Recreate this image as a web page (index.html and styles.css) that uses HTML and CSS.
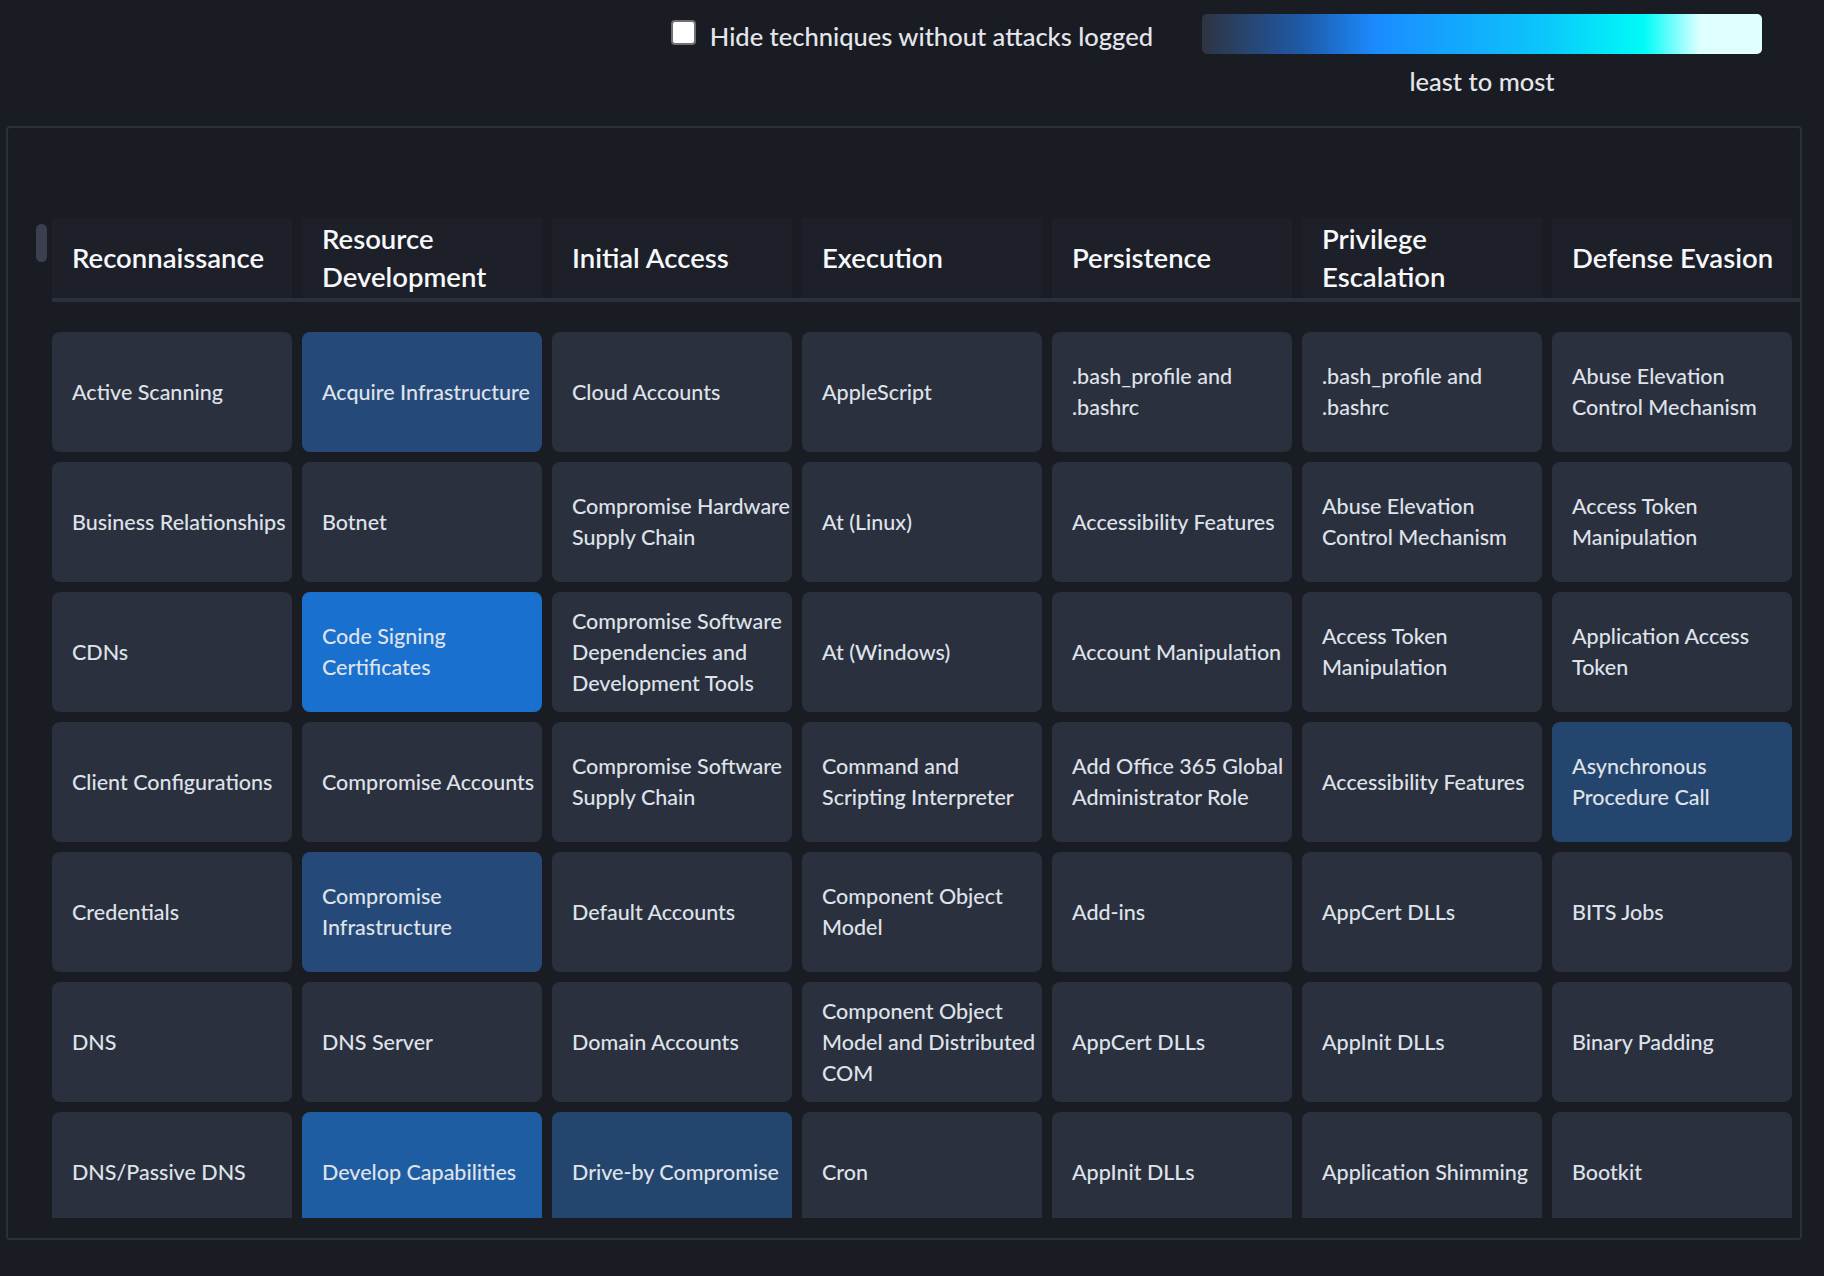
FILE: index.html
```html
<!DOCTYPE html>
<html lang="en">
<head>
  <meta charset="UTF-8">
  <meta name="viewport" content="width=device-width, initial-scale=1.0">
  <title>ATT&amp;CK Heatmap</title>
  <link rel="stylesheet" href="styles.css">
</head>
<body>
  <!-- Filter + legend -->
  <div class="top-bar">
    <label class="hide-toggle">
      <span class="checkbox"></span>
      <span class="toggle-text">Hide techniques without attacks logged</span>
    </label>
    <div class="legend">
      <div class="legend-bar"></div>
      <div class="legend-caption">least to most</div>
    </div>
  </div>

  <!-- Matrix -->
  <div class="matrix-panel">
    <div class="scroll-thumb"></div>

    <div class="tactic-row">
      <div class="tactic">Reconnaissance</div>
      <div class="tactic">Resource Development</div>
      <div class="tactic">Initial Access</div>
      <div class="tactic">Execution</div>
      <div class="tactic">Persistence</div>
      <div class="tactic">Privilege Escalation</div>
      <div class="tactic">Defense Evasion</div>
    </div>

    <div class="technique-grid">
      <!-- Reconnaissance -->
      <div class="technique">Active Scanning</div>
      <div class="technique">Business Relationships</div>
      <div class="technique">CDNs</div>
      <div class="technique">Client Configurations</div>
      <div class="technique">Credentials</div>
      <div class="technique">DNS</div>
      <div class="technique">DNS/Passive DNS</div>

      <!-- Resource Development -->
      <div class="technique level-2">Acquire Infrastructure</div>
      <div class="technique">Botnet</div>
      <div class="technique level-4">Code Signing Certificates</div>
      <div class="technique">Compromise Accounts</div>
      <div class="technique level-2">Compromise Infrastructure</div>
      <div class="technique">DNS Server</div>
      <div class="technique level-3">Develop Capabilities</div>

      <!-- Initial Access -->
      <div class="technique">Cloud Accounts</div>
      <div class="technique">Compromise Hardware Supply Chain</div>
      <div class="technique">Compromise Software Dependencies and Development Tools</div>
      <div class="technique">Compromise Software Supply Chain</div>
      <div class="technique">Default Accounts</div>
      <div class="technique">Domain Accounts</div>
      <div class="technique level-1">Drive-by Compromise</div>

      <!-- Execution -->
      <div class="technique">AppleScript</div>
      <div class="technique">At (Linux)</div>
      <div class="technique">At (Windows)</div>
      <div class="technique">Command and Scripting Interpreter</div>
      <div class="technique">Component Object Model</div>
      <div class="technique">Component Object Model and Distributed COM</div>
      <div class="technique">Cron</div>

      <!-- Persistence -->
      <div class="technique">.bash_profile and .bashrc</div>
      <div class="technique">Accessibility Features</div>
      <div class="technique">Account Manipulation</div>
      <div class="technique">Add Office 365 Global Administrator Role</div>
      <div class="technique">Add-ins</div>
      <div class="technique">AppCert DLLs</div>
      <div class="technique">AppInit DLLs</div>

      <!-- Privilege Escalation -->
      <div class="technique">.bash_profile and .bashrc</div>
      <div class="technique">Abuse Elevation Control Mechanism</div>
      <div class="technique">Access Token Manipulation</div>
      <div class="technique">Accessibility Features</div>
      <div class="technique">AppCert DLLs</div>
      <div class="technique">AppInit DLLs</div>
      <div class="technique">Application Shimming</div>

      <!-- Defense Evasion -->
      <div class="technique">Abuse Elevation Control Mechanism</div>
      <div class="technique">Access Token Manipulation</div>
      <div class="technique">Application Access Token</div>
      <div class="technique level-1">Asynchronous Procedure Call</div>
      <div class="technique">BITS Jobs</div>
      <div class="technique">Binary Padding</div>
      <div class="technique">Bootkit</div>
    </div>
  </div>
</body>
</html>
```

FILE: styles.css
```css
/* General */
body {
  margin: 0 22px 0 6px;
  background: #1a1c23;
  color: #e4e6ec;
  font-family: Lato, "Noto Sans", sans-serif;
}

/* Top bar: filter toggle + legend */
.top-bar {
  height: 126px;
  box-sizing: border-box;
  padding: 14px 40px 0 0;
  display: flex;
  justify-content: flex-end;
  align-items: flex-start;
  gap: 49px;
}

.hide-toggle {
  display: flex;
  align-items: flex-start;
  gap: 14px;
  margin-top: 6px;
  cursor: pointer;
}

.checkbox {
  width: 25px;
  height: 25px;
  box-sizing: border-box;
  background: #fff;
  border: 2px solid #6f6f74;
  border-radius: 4px;
  flex-shrink: 0;
}

.toggle-text {
  margin-top: 1px;
  font-size: 25.5px;
  font-weight: 500;
  line-height: 30px;
}

.legend {
  width: 560px;
  text-align: center;
}

.legend-bar {
  height: 40px;
  border-radius: 5px;
  background: linear-gradient(to right, #2e3442 0%, #1f5aa8 18%, #1b8bff 31%, #0cc4fb 60%, #00fbf8 79%, #dfffff 89%, #dfffff 100%);
}

.legend-caption {
  margin-top: 12px;
  font-size: 25.5px;
  font-weight: 500;
  line-height: 30px;
}

/* Matrix panel */
.matrix-panel {
  position: relative;
  border: 2px solid #2a2f3a;
  border-radius: 4px;
  padding: 90px 0 20px 44px;
}

.scroll-thumb {
  position: absolute;
  left: 28px;
  top: 96px;
  width: 11px;
  height: 38px;
  border-radius: 6px;
  background: #3a4050;
}

.tactic-row {
  display: grid;
  grid-template-columns: repeat(7, 240px);
  gap: 10px;
  border-bottom: 4px solid #2a303c;
}

.tactic {
  height: 80px;
  box-sizing: border-box;
  padding: 0 0 0 20px;
  display: flex;
  align-items: center;
  background: #1d2029;
  color: #f7f8fa;
  font-size: 27.5px;
  font-weight: 600;
  line-height: 38px;
}

.technique-grid {
  margin-top: 30px;
  height: 886px;
  overflow: hidden;
  display: grid;
  grid-template-rows: repeat(7, 120px);
  grid-auto-flow: column;
  grid-auto-columns: 240px;
  gap: 10px;
}

.technique {
  box-sizing: border-box;
  padding: 0 0 0 20px;
  display: flex;
  align-items: center;
  background: #2a303e;
  border-radius: 8px;
  color: #dfe2e9;
  font-size: 21.5px;
  font-weight: 500;
  line-height: 31px;
}

/* Heat levels */
.technique.level-1 {
  background: #24456d;
}

.technique.level-2 {
  background: #254a7a;
}

.technique.level-3 {
  background: #1f5da2;
}

.technique.level-4 {
  background: #1970cf;
}
```
